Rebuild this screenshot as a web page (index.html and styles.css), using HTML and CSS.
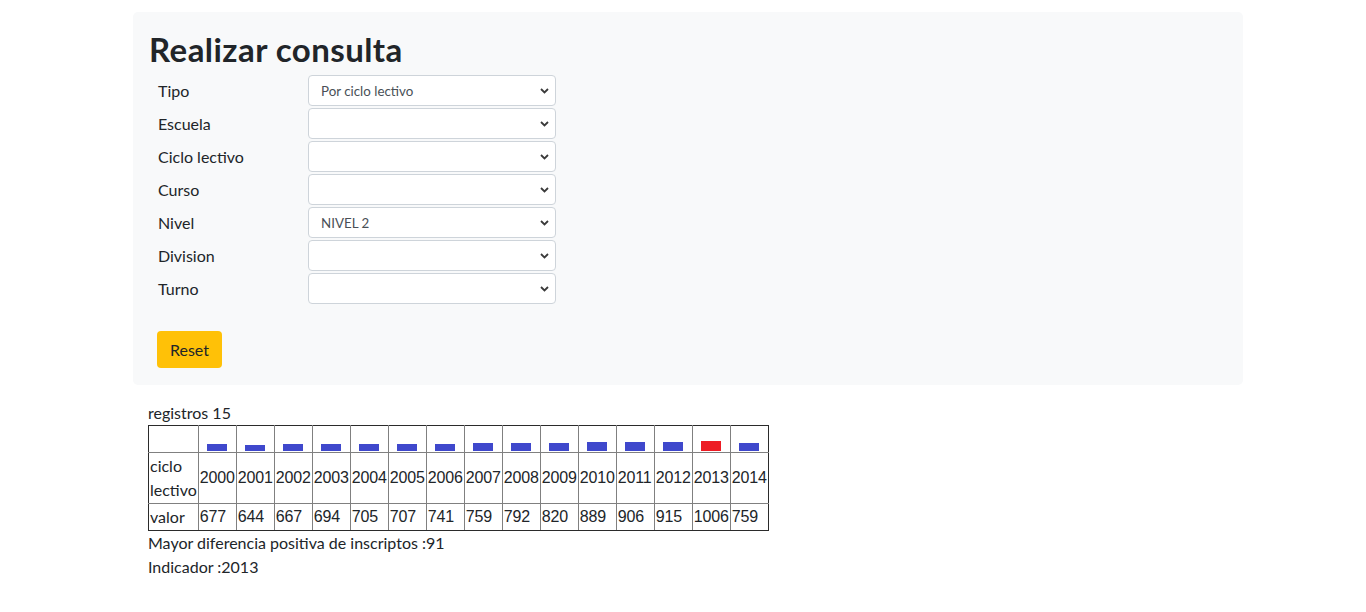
FILE: index.html
```html
<!DOCTYPE html>
<html lang="es">
<head>
<meta charset="utf-8">
<title>Realizar consulta</title>
<link rel="stylesheet" href="styles.css">
</head>
<body>
<div class="page">
  <section class="jumbo">
    <h1 class="title">Realizar consulta</h1>
    <form class="filters">
      <label class="lbl">Tipo</label>
      <div class="sel-wrap"><select class="sel"><option>Por ciclo lectivo</option></select><svg class="chev" width="9" height="6" viewBox="0 0 9 6"><polyline points="1,1 4.5,4.5 8,1" fill="none" stroke="#3a3a3a" stroke-width="1.8"/></svg></div>
      <label class="lbl">Escuela</label>
      <div class="sel-wrap"><select class="sel"><option></option></select><svg class="chev" width="9" height="6" viewBox="0 0 9 6"><polyline points="1,1 4.5,4.5 8,1" fill="none" stroke="#3a3a3a" stroke-width="1.8"/></svg></div>
      <label class="lbl">Ciclo lectivo</label>
      <div class="sel-wrap"><select class="sel"><option></option></select><svg class="chev" width="9" height="6" viewBox="0 0 9 6"><polyline points="1,1 4.5,4.5 8,1" fill="none" stroke="#3a3a3a" stroke-width="1.8"/></svg></div>
      <label class="lbl">Curso</label>
      <div class="sel-wrap"><select class="sel"><option></option></select><svg class="chev" width="9" height="6" viewBox="0 0 9 6"><polyline points="1,1 4.5,4.5 8,1" fill="none" stroke="#3a3a3a" stroke-width="1.8"/></svg></div>
      <label class="lbl">Nivel</label>
      <div class="sel-wrap"><select class="sel"><option>NIVEL 2</option></select><svg class="chev" width="9" height="6" viewBox="0 0 9 6"><polyline points="1,1 4.5,4.5 8,1" fill="none" stroke="#3a3a3a" stroke-width="1.8"/></svg></div>
      <label class="lbl">Division</label>
      <div class="sel-wrap"><select class="sel"><option></option></select><svg class="chev" width="9" height="6" viewBox="0 0 9 6"><polyline points="1,1 4.5,4.5 8,1" fill="none" stroke="#3a3a3a" stroke-width="1.8"/></svg></div>
      <label class="lbl">Turno</label>
      <div class="sel-wrap"><select class="sel"><option></option></select><svg class="chev" width="9" height="6" viewBox="0 0 9 6"><polyline points="1,1 4.5,4.5 8,1" fill="none" stroke="#3a3a3a" stroke-width="1.8"/></svg></div>
    </form>
    <button class="btn-reset" type="button">Reset</button>
  </section>

  <div class="results">
    <p class="line">registros 15</p>
    <table class="grid">
      <tr class="bars">
        <td class="head"></td>
        <td><div class="barbox"><span class="bar" style="height:7px"></span></div></td>
        <td><div class="barbox"><span class="bar" style="height:6px"></span></div></td>
        <td><div class="barbox"><span class="bar" style="height:7px"></span></div></td>
        <td><div class="barbox"><span class="bar" style="height:7px"></span></div></td>
        <td><div class="barbox"><span class="bar" style="height:7px"></span></div></td>
        <td><div class="barbox"><span class="bar" style="height:7px"></span></div></td>
        <td><div class="barbox"><span class="bar" style="height:7px"></span></div></td>
        <td><div class="barbox"><span class="bar" style="height:8px"></span></div></td>
        <td><div class="barbox"><span class="bar" style="height:8px"></span></div></td>
        <td><div class="barbox"><span class="bar" style="height:8px"></span></div></td>
        <td><div class="barbox"><span class="bar" style="height:9px"></span></div></td>
        <td><div class="barbox"><span class="bar" style="height:9px"></span></div></td>
        <td><div class="barbox"><span class="bar" style="height:9px"></span></div></td>
        <td><div class="barbox"><span class="bar bar-max" style="height:10px"></span></div></td>
        <td><div class="barbox"><span class="bar" style="height:8px"></span></div></td>
      </tr>
      <tr>
        <td class="head">ciclo lectivo</td>
        <td class="num">2000</td><td class="num">2001</td><td class="num">2002</td><td class="num">2003</td><td class="num">2004</td><td class="num">2005</td><td class="num">2006</td><td class="num">2007</td><td class="num">2008</td><td class="num">2009</td><td class="num">2010</td><td class="num">2011</td><td class="num">2012</td><td class="num">2013</td><td class="num">2014</td>
      </tr>
      <tr>
        <td class="head">valor</td>
        <td class="num">677</td><td class="num">644</td><td class="num">667</td><td class="num">694</td><td class="num">705</td><td class="num">707</td><td class="num">741</td><td class="num">759</td><td class="num">792</td><td class="num">820</td><td class="num">889</td><td class="num">906</td><td class="num">915</td><td class="num">1006</td><td class="num">759</td>
      </tr>
    </table>
    <p class="line">Mayor diferencia positiva de inscriptos :91</p>
    <p class="line">Indicador :2013</p>
  </div>
</div>
</body>
</html>
```

FILE: styles.css
```css
* { box-sizing: border-box; }

body {
  margin: 0;
  font-family: Lato, "Liberation Sans", sans-serif;
  font-size: 16px;
  line-height: 24px;
  color: #212529;
  background: #fff;
}

.page {
  padding: 12px 0 0 133px;
}

.jumbo {
  width: 1110px;
  background: #f8f9fa;
  border-radius: 5px;
  padding: 18px 16px 17px 16px;
}

.title {
  margin: 0 0 7px 0;
  font-size: 33px;
  line-height: 38px;
  font-weight: 700;
  letter-spacing: 0.45px;
}

.filters {
  display: grid;
  grid-template-columns: 150px 248px;
  grid-auto-rows: 31px;
  row-gap: 2px;
  align-items: center;
  padding-left: 9px;
}

.sel-wrap {
  position: relative;
  height: 31px;
}

.sel {
  appearance: none;
  -webkit-appearance: none;
  width: 100%;
  height: 31px;
  margin: 0;
  border: 1px solid #ced4da;
  border-radius: 4px;
  background: #fff;
  padding: 0 24px 0 12px;
  font-family: inherit;
  font-size: 13.33px;
  color: #495057;
}

.chev {
  position: absolute;
  right: 7px;
  top: 13px;
  pointer-events: none;
}

.btn-reset {
  display: block;
  margin: 27px 0 0 8px;
  width: 65px;
  height: 37px;
  padding: 0;
  border: 0;
  border-radius: 4px;
  background: #ffc107;
  color: #212529;
  font-family: inherit;
  font-size: 16px;
  line-height: 37px;
  text-align: center;
}

.results {
  padding: 16px 0 0 15px;
}

.line {
  margin: 0;
}

.grid {
  border-collapse: collapse;
}

.grid td {
  border: 1px solid #808080;
  padding: 1px;
  white-space: nowrap;
  vertical-align: middle;
}

.grid td.head {
  width: 1px;
  white-space: normal;
}

.grid td.num {
  width: 38px;
  font-family: "Liberation Sans", Arial, sans-serif;
  letter-spacing: -0.2px;
}

.grid tr:first-child td { border-top-color: #2b2b2b; }
.grid tr:last-child td { border-bottom-color: #2b2b2b; }
.grid td:first-child { border-left-color: #2b2b2b; }
.grid td:last-child { border-right-color: #2b2b2b; }

.barbox {
  height: 24px;
  display: flex;
  align-items: flex-end;
  justify-content: center;
}

.bar {
  display: block;
  width: 20px;
  background: #3f48cc;
}

.bar-max {
  background: #ed1c24;
}
```
